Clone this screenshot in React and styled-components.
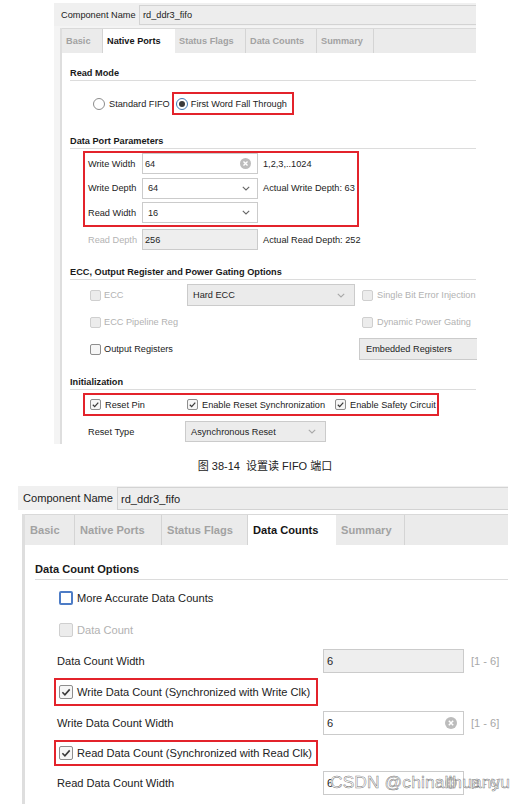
import React from 'react'
import styled, { createGlobalStyle } from 'styled-components'

const GlobalStyle = createGlobalStyle`
  html, body { margin: 0; padding: 0; background: #fff; }
  body {
    width: 527px;
    height: 804px;
    overflow: hidden;
    font-family: "Liberation Sans", Arial, "Noto Sans CJK SC", sans-serif;
    color: #1f1f1f;
  }
`

const Page = styled.div`
  display: flex;
  flex-direction: column;
  padding-top: 3px;
`

const Panel = styled.div`
  position: relative;
  margin-left: ${p => p.$x}px;
  margin-top: ${p => p.$mt || 0}px;
  width: ${p => p.$w}px;
  font-size: ${p => p.$fs}px;
  background: ${p => p.$bg};
`

const NameRow = styled.div`
  display: flex;
  align-items: stretch;
  height: ${p => p.$h}px;
  padding-left: ${p => p.$pl}px;
  background: #f0f0f0;
`

const NameLabel = styled.span`
  width: ${p => p.$w}px;
  flex-shrink: 0;
  display: flex;
  align-items: center;
  color: #222;
`

const NameInput = styled.div`
  flex: 1;
  margin: ${p => p.$m};
  display: flex;
  align-items: center;
  padding-left: 3px;
  background: #ededed;
  border: 1px solid #d3d3d3;
  border-right: none;
  color: #222;
`

const Frame = styled.div`
  margin-left: ${p => p.$gutter}px;
  margin-top: ${p => p.$mt}px;
  border-left: ${p => p.$bw}px solid #dedede;
`

const TabBar = styled.div`
  display: flex;
  height: ${p => p.$h}px;
  background: #ebebeb;
  border-top: 1px solid #d9d9d9;
  box-sizing: border-box;
`

const Tab = styled.div`
  width: ${p => p.$w}px;
  box-sizing: border-box;
  display: flex;
  align-items: center;
  padding-left: ${p => p.$pl}px;
  font-weight: bold;
  color: ${p => (p.$active ? '#151515' : '#a2a2a2')};
  background: ${p => (p.$active ? '#fff' : 'transparent')};
  border-right: 1px solid ${p => (p.$active ? '#fff' : '#d4d4d4')};
`

const Content = styled.div`
  background: #fff;
  padding-bottom: ${p => p.$pb || 0}px;
  display: flex;
  flex-direction: column;
`

const Title = styled.div`
  margin: ${p => p.$mt}px 0 0 ${p => p.$ml}px;
  line-height: ${p => p.$lh}px;
  padding-bottom: ${p => p.$pb}px;
  border-bottom: 1px solid #dcdcdc;
  font-weight: bold;
  color: #1a1a1a;
`

const Highlight = styled.div`
  box-sizing: border-box;
  margin: ${p => p.$mt}px 0 0 ${p => p.$ml}px;
  width: ${p => p.$w}px;
  height: ${p => p.$h}px;
  border: 2px solid #e3232b;
  padding-left: ${p => p.$pl || 0}px;
  display: flex;
  flex-direction: ${p => (p.$column ? 'column' : 'row')};
  align-items: ${p => (p.$column ? 'stretch' : 'center')};
  gap: ${p => p.$gap || 0}px;
`

const InlineRow = styled.div`
  display: flex;
  align-items: center;
  height: ${p => p.$h}px;
  margin: ${p => p.$mt || 0}px 0 0 ${p => p.$ml || 0}px;
`

const Choice = styled.label`
  display: flex;
  align-items: center;
  gap: ${p => p.$gap}px;
  white-space: nowrap;
  color: ${p => (p.$disabled ? '#b2b2b2' : '#222')};
`

const RadioDot = styled.span`
  width: 12px;
  height: 12px;
  box-sizing: border-box;
  border-radius: 50%;
  border: 1px solid ${p => (p.$on ? '#3f78b4' : '#8c8c8c')};
  background: #fff;
  display: inline-flex;
  align-items: center;
  justify-content: center;
  &::after {
    content: '';
    width: 6px;
    height: 6px;
    border-radius: 50%;
    background: ${p => (p.$on ? '#3a3a3a' : 'transparent')};
  }
`

const Box = styled.span`
  width: ${p => p.$s}px;
  height: ${p => p.$s}px;
  box-sizing: border-box;
  flex-shrink: 0;
  border-radius: 2px;
  border: ${p => (p.$focus ? '2px solid #4d7cc6' : p.$disabled ? '1px solid #cfcfcf' : '1px solid #8e8e8e')};
  background: ${p => (p.$disabled ? '#ececec' : p.$focus ? '#fff' : '#f6f6f6')};
  display: inline-flex;
  align-items: center;
  justify-content: center;
  svg { display: block; }
`

const FieldRow = styled.div`
  display: flex;
  align-items: center;
  height: ${p => p.$h}px;
  margin: ${p => p.$mt || 0}px 0 0 ${p => p.$ml || 0}px;
  flex-shrink: 0;
`

const FieldLabel = styled.span`
  width: ${p => p.$w}px;
  flex-shrink: 0;
  color: ${p => (p.$disabled ? '#b4b4b4' : '#222')};
`

const Field = styled.div`
  box-sizing: border-box;
  width: ${p => p.$w}px;
  align-self: stretch;
  display: flex;
  align-items: center;
  justify-content: space-between;
  padding: 0 ${p => p.$pr || 6}px 0 ${p => p.$pl || 3}px;
  background: ${p => p.$bg || '#fff'};
  border: 1px solid #cbcbcb;
  border-right: ${p => (p.$open ? 'none' : '1px solid #cbcbcb')};
  color: #1f1f1f;
  flex-shrink: 0;
`

const Note = styled.span`
  margin-left: ${p => p.$ml}px;
  white-space: nowrap;
  color: ${p => (p.$muted ? '#a8a8a8' : '#222')};
`

const OptionGrid = styled.div`
  display: grid;
  grid-template-columns: ${p => p.$cols};
  align-items: center;
  height: ${p => p.$h}px;
  margin: ${p => p.$mt || 0}px 0 0 ${p => p.$ml || 0}px;
  flex-shrink: 0;
`

const Cell = styled.div`
  display: flex;
  align-items: center;
  align-self: stretch;
  padding-left: ${p => p.$pl || 0}px;
  min-width: 0;
`

const Caption = styled.div`
  margin-top: 15px;
  padding-left: 3px;
  text-align: center;
  font-size: 11px;
  line-height: 14px;
  color: #222;
  white-space: pre;
`

const Watermark = styled.div`
  position: absolute;
  left: 312px;
  top: 286px;
  font-size: 17.4px;
  line-height: 20px;
  white-space: nowrap;
  color: rgba(255, 255, 255, 0.8);
  -webkit-text-stroke: 0.5px rgba(90, 90, 90, 0.85);
  letter-spacing: 0.1px;
`

const Check = ({ s }) => (
  <svg width={s - 2} height={s - 2} viewBox="0 0 12 12">
    <path d="M2.4 6.3 L4.9 8.8 L9.7 3.4" fill="none" stroke="#3a3a3a" strokeWidth="1.6" />
  </svg>
)

const CheckBox = ({ s = 11, checked, disabled, focus }) => (
  <Box $s={s} $disabled={disabled} $focus={focus}>
    {checked && <Check s={s} />}
  </Box>
)

const ClearIcon = ({ s = 11 }) => (
  <svg width={s} height={s} viewBox="0 0 12 12">
    <circle cx="6" cy="6" r="6" fill="#bcbcbc" />
    <path d="M3.8 3.8 L8.2 8.2 M8.2 3.8 L3.8 8.2" stroke="#fff" strokeWidth="1.5" />
  </svg>
)

const Chevron = ({ light }) => (
  <svg width="8" height="5" viewBox="0 0 8 5">
    <polyline points="0.8,0.8 4,4 7.2,0.8" fill="none" stroke={light ? '#a8a8a8' : '#666'} strokeWidth="1.1" />
  </svg>
)

const topTabs = [
  ['Basic', 41],
  ['Native Ports', 72],
  ['Status Flags', 71],
  ['Data Counts', 71],
  ['Summary', 57],
]

const bottomTabs = [
  ['Basic', 50],
  ['Native Ports', 87],
  ['Status Flags', 86],
  ['Data Counts', 88],
  ['Summary', 69],
]

function NativePortsPanel() {
  return (
    <Panel $x={54} $w={422} $fs={9.2} $bg="#f4f4f4">
      <NameRow $h={23} $pl={7}>
        <NameLabel $w={78}>Component Name</NameLabel>
        <NameInput $m="2px 0 1px">rd_ddr3_fifo</NameInput>
      </NameRow>
      <Frame $gutter={6} $bw={2} $mt={2}>
        <TabBar $h={25}>
          {topTabs.map(([name, w]) => (
            <Tab key={name} $w={w} $pl={4} $active={name === 'Native Ports'}>
              {name}
            </Tab>
          ))}
        </TabBar>
        <Content $pb={2}>
          <Title $mt={14} $ml={8} $lh={12} $pb={1}>Read Mode</Title>
          <InlineRow $h={23} $mt={11} $ml={31}>
            <Choice $gap={4}>
              <RadioDot />
              Standard FIFO
            </Choice>
            <Highlight $mt={0} $ml={2} $w={122} $h={23} $pl={2}>
              <Choice $gap={3}>
                <RadioDot $on />
                First Word Fall Through
              </Choice>
            </Highlight>
          </InlineRow>

          <Title $mt={20} $ml={8} $lh={12} $pb={1}>Data Port Parameters</Title>
          <Highlight $column $mt={2} $ml={21} $w={276} $h={76} $pl={3} $gap={3.5}>
            <FieldRow $h={21}>
              <FieldLabel $w={54}>Write Width</FieldLabel>
              <Field $w={116} $pl={2}>
                64
                <ClearIcon />
              </Field>
              <Note $ml={5}>1,2,3,..1024</Note>
            </FieldRow>
            <FieldRow $h={21}>
              <FieldLabel $w={54}>Write Depth</FieldLabel>
              <Field $w={116} $pl={5} $pr={7}>
                64
                <Chevron />
              </Field>
              <Note $ml={5}>Actual Write Depth: 63</Note>
            </FieldRow>
            <FieldRow $h={21}>
              <FieldLabel $w={54}>Read Width</FieldLabel>
              <Field $w={116} $pl={5} $pr={7}>
                16
                <Chevron />
              </Field>
            </FieldRow>
          </Highlight>
          <FieldRow $h={21} $mt={2} $ml={26}>
            <FieldLabel $w={54} $disabled>Read Depth</FieldLabel>
            <Field $w={116} $pl={2} $bg="#eeeeee">256</Field>
            <Note $ml={5}>Actual Read Depth: 252</Note>
          </FieldRow>

          <Title $mt={16} $ml={8} $lh={12} $pb={1}>ECC, Output Register and Power Gating Options</Title>
          <OptionGrid $cols="97px 172px 1fr" $h={22} $mt={4} $ml={28}>
            <Cell>
              <Choice $gap={3} $disabled>
                <CheckBox disabled />
                ECC
              </Choice>
            </Cell>
            <Cell>
              <Field $w={168} $pl={5} $pr={9} $bg="#ebebeb">
                Hard ECC
                <Chevron light />
              </Field>
            </Cell>
            <Cell $pl={3}>
              <Choice $gap={4} $disabled>
                <CheckBox disabled />
                Single Bit Error Injection
              </Choice>
            </Cell>
          </OptionGrid>
          <OptionGrid $cols="97px 172px 1fr" $h={22} $mt={5} $ml={28}>
            <Cell>
              <Choice $gap={3} $disabled>
                <CheckBox disabled />
                ECC Pipeline Reg
              </Choice>
            </Cell>
            <Cell />
            <Cell $pl={3}>
              <Choice $gap={4} $disabled>
                <CheckBox disabled />
                Dynamic Power Gating
              </Choice>
            </Cell>
          </OptionGrid>
          <OptionGrid $cols="97px 172px 1fr" $h={22} $mt={5} $ml={28}>
            <Cell>
              <Choice $gap={3}>
                <CheckBox />
                Output Registers
              </Choice>
            </Cell>
            <Cell />
            <Cell>
              <Field $w={118} $pl={6} $bg="#ebebeb" $open>Embedded Registers</Field>
            </Cell>
          </OptionGrid>

          <Title $mt={16} $ml={8} $lh={12} $pb={1}>Initialization</Title>
          <Highlight $mt={3} $ml={21} $w={356} $h={23} $pl={5}>
            <OptionGrid $cols="97px 148px 1fr" $h={19}>
              <Cell>
                <Choice $gap={4}>
                  <CheckBox checked />
                  Reset Pin
                </Choice>
              </Cell>
              <Cell>
                <Choice $gap={4}>
                  <CheckBox checked />
                  Enable Reset Synchronization
                </Choice>
              </Cell>
              <Cell>
                <Choice $gap={4}>
                  <CheckBox checked />
                  Enable Safety Circuit
                </Choice>
              </Cell>
            </OptionGrid>
          </Highlight>
          <FieldRow $h={21} $mt={5} $ml={26}>
            <FieldLabel $w={97}>Reset Type</FieldLabel>
            <Field $w={141} $pl={5} $pr={9} $bg="#ececec">
              Asynchronous Reset
              <Chevron light />
            </Field>
          </FieldRow>
        </Content>
      </Frame>
    </Panel>
  )
}

function DataCountsPanel() {
  return (
    <Panel $x={18} $w={490} $fs={11.1} $bg="#fff" $mt={13}>
      <NameRow $h={24} $pl={5}>
        <NameLabel $w={94}>Component Name</NameLabel>
        <NameInput $m="1px 0 0">rd_ddr3_fifo</NameInput>
      </NameRow>
      <Frame $gutter={4} $bw={3} $mt={4}>
        <TabBar $h={31}>
          {bottomTabs.map(([name, w]) => (
            <Tab key={name} $w={w} $pl={5} $active={name === 'Data Counts'}>
              {name}
            </Tab>
          ))}
        </TabBar>
        <Content $pb={10}>
          <Title $mt={17} $ml={10} $lh={14} $pb={3}>Data Count Options</Title>
          <InlineRow $h={20} $mt={8} $ml={34}>
            <Choice $gap={4}>
              <CheckBox s={14} focus />
              More Accurate Data Counts
            </Choice>
          </InlineRow>
          <InlineRow $h={20} $mt={12} $ml={34}>
            <Choice $gap={4} $disabled>
              <CheckBox s={14} disabled />
              Data Count
            </Choice>
          </InlineRow>
          <FieldRow $h={24} $mt={9} $ml={32}>
            <FieldLabel $w={266}>Data Count Width</FieldLabel>
            <Field $w={141} $pl={3} $bg="#eeeeee">6</Field>
            <Note $ml={7} $muted>[1 - 6]</Note>
          </FieldRow>
          <Highlight $mt={5} $ml={29} $w={264} $h={28} $pl={3}>
            <Choice $gap={4}>
              <CheckBox s={14} checked />
              Write Data Count (Synchronized with Write Clk)
            </Choice>
          </Highlight>
          <FieldRow $h={24} $mt={5} $ml={32}>
            <FieldLabel $w={266}>Write Data Count Width</FieldLabel>
            <Field $w={141} $pl={3}>
              6
              <ClearIcon s={12} />
            </Field>
            <Note $ml={7} $muted>[1 - 6]</Note>
          </FieldRow>
          <Highlight $mt={5} $ml={29} $w={264} $h={26} $pl={3}>
            <Choice $gap={4}>
              <CheckBox s={14} checked />
              Read Data Count (Synchronized with Read Clk)
            </Choice>
          </Highlight>
          <FieldRow $h={24} $mt={5} $ml={32}>
            <FieldLabel $w={266}>Read Data Count Width</FieldLabel>
            <Field $w={141} $pl={3}>
              6
              <ClearIcon s={12} />
            </Field>
            <Note $ml={7} $muted>[1 - 6]</Note>
          </FieldRow>
        </Content>
      </Frame>
      <Watermark>CSDN @chinalihuanyu</Watermark>
    </Panel>
  )
}

export default function App() {
  return (
    <>
      <GlobalStyle />
      <Page>
        <NativePortsPanel />
        <Caption>{'图 38-14  设置读 FIFO 端口'}</Caption>
        <DataCountsPanel />
      </Page>
    </>
  )
}
